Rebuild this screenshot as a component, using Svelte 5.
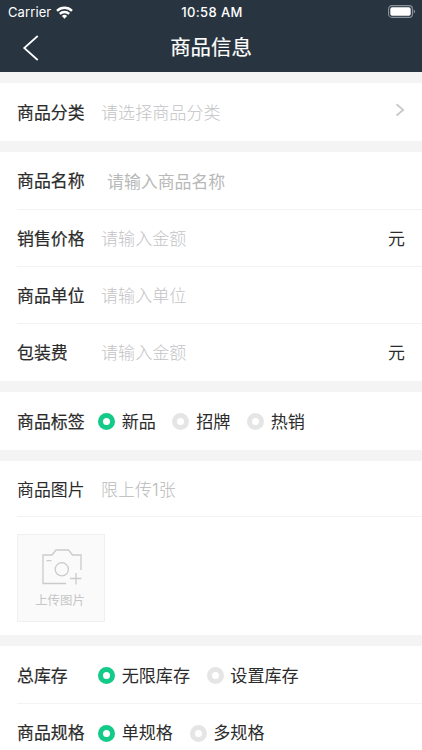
<script>
  const stockOptions = ['无限库存', '设置库存'];
  const specOptions = ['单规格', '多规格'];
  const tagOptions = ['新品', '招牌', '热销'];

  let tag = $state('新品');
  let stock = $state('无限库存');
  let spec = $state('单规格');
</script>

{#snippet radios(options, value, pick)}
  <div class="radios" role="radiogroup">
    {#each options as option (option)}
      <button
        type="button"
        class="radio"
        class:on={option === value}
        role="radio"
        aria-checked={option === value}
        onclick={() => pick(option)}
      >
        <span class="dot"></span>
        <span>{option}</span>
      </button>
    {/each}
  </div>
{/snippet}

<div class="page">
  <header>
    <div class="status">
      <div class="carrier">
        <span>Carrier</span>
        <svg width="17" height="13" viewBox="0 0 17 13" fill="none" stroke="#fff" stroke-width="2.4" aria-hidden="true">
          <path d="M1 4.8a10.7 10.7 0 0 1 15 0" />
          <path d="M3.8 7.9a6.7 6.7 0 0 1 9.4 0" />
          <path d="M8.5 12.7 5.9 10a3.7 3.7 0 0 1 5.2 0z" fill="#fff" stroke="none" />
        </svg>
      </div>
      <span class="time">10:58 AM</span>
      <div class="battery">
        <svg width="28" height="13" viewBox="0 0 28 13" aria-hidden="true">
          <rect x=".6" y=".6" width="23.8" height="11.8" rx="3.2" fill="none" stroke="#89929a" stroke-width="1.1" />
          <rect x="2.3" y="2.2" width="20.4" height="8.6" rx="1.8" fill="#fff" />
          <path d="M25.7 4.5c1.8.6 1.8 3.4 0 4z" fill="#89929a" />
        </svg>
      </div>
    </div>
    <div class="nav">
      <button type="button" class="back" aria-label="返回">
        <svg width="18" height="26" viewBox="0 0 18 26" fill="none" stroke="#fff" stroke-width="1.7" aria-hidden="true">
          <path d="M15.7 1 2.2 13l13.5 12" />
        </svg>
      </button>
      <h1>商品信息</h1>
    </div>
  </header>

  <section>
    <div class="row">
      <span class="label">商品分类</span>
      <span class="hint">请选择商品分类</span>
      <svg class="arrow" width="10" height="14" viewBox="0 0 10 14" fill="none" stroke="#c7c7cc" stroke-width="1.8" aria-hidden="true">
        <path d="m1.5 1.3 6.6 5.6-6.6 5.6" />
      </svg>
    </div>
  </section>

  <section>
    <div class="row name">
      <span class="label">商品名称</span>
      <span class="hint">请输入商品名称</span>
    </div>
    <div class="row">
      <span class="label">销售价格</span>
      <span class="hint">请输入金额</span>
      <span class="unit">元</span>
    </div>
    <div class="row">
      <span class="label">商品单位</span>
      <span class="hint">请输入单位</span>
    </div>
    <div class="row">
      <span class="label">包装费</span>
      <span class="hint">请输入金额</span>
      <span class="unit">元</span>
    </div>
  </section>

  <section>
    <div class="row">
      <span class="label">商品标签</span>
      {@render radios(tagOptions, tag, (v) => (tag = v))}
    </div>
  </section>

  <section>
    <div class="row short">
      <span class="label light">商品图片</span>
      <span class="hint limit">限上传1张</span>
    </div>
    <div class="pictures">
      <button type="button" class="upload">
        <svg width="40" height="36" viewBox="0 0 40 36" fill="none" stroke="#cbcbcb" stroke-width="1.3" aria-hidden="true">
          <path d="M24 34.5H1V6h9l4-5h12.5l4 5H39v15" />
          <circle cx="19.8" cy="20.3" r="6.6" />
          <path d="M4.5 11.7h5M34 24v11.5M28 29.5h11.5" />
        </svg>
        <span>上传图片</span>
      </button>
    </div>
  </section>

  <section>
    <div class="row">
      <span class="label">总库存</span>
      {@render radios(stockOptions, stock, (v) => (stock = v))}
    </div>
    <div class="row">
      <span class="label">商品规格</span>
      {@render radios(specOptions, spec, (v) => (spec = v))}
    </div>
  </section>
</div>

<style>
  :global(body) {
    margin: 0;
    overflow: hidden;
    background: #f4f4f4;
  }

  .page {
    height: 750px;
    overflow: hidden;
    background: #f4f4f4;
    color: #2b2b2b;
    font-family: Inter, 'Noto Sans CJK SC', sans-serif;
    font-size: 16.9px;
    line-height: 24px;
  }

  button {
    padding: 0;
    border: 0;
    background: none;
    color: inherit;
    font: inherit;
  }

  svg {
    display: block;
    flex: none;
  }

  header {
    height: 72px;
    background: #283540;
    color: #fff;
  }

  .status {
    display: grid;
    grid-template-columns: 1fr auto 1fr;
    align-items: center;
    height: 23px;
    padding: 0 6px 0 8px;
    font-size: 13px;
    line-height: 23px;
  }

  .carrier {
    display: flex;
    align-items: center;
    gap: 5px;
    letter-spacing: 0.1px;
  }

  .time {
    padding-top: 1px;
    font-weight: 500;
    letter-spacing: 0.4px;
  }

  .battery {
    justify-self: end;
    margin-bottom: 1px;
  }

  .nav {
    display: grid;
    grid-template-columns: 60px 1fr 60px;
    align-items: center;
    height: 49px;
  }

  .back {
    padding-left: 22px;
  }

  h1 {
    margin: 0;
    padding-top: 1px;
    font-size: 20.4px;
    font-weight: 400;
    line-height: 30px;
    text-align: center;
    -webkit-text-stroke: 0.2px;
  }

  section {
    margin-top: 11px;
    padding-bottom: 1px;
    background: #fff;
  }

  .row {
    display: flex;
    align-items: center;
    box-sizing: border-box;
    height: 57px;
    margin-left: 17px;
    padding: 2px 17px 0 0;
  }

  .row + .row {
    border-top: 1px solid #f3f3f3;
  }

  .row.short {
    height: 56px;
    border-bottom: 1px solid #f3f3f3;
  }

  .label {
    flex: none;
    width: 84px;
    -webkit-text-stroke: 0.2px;
  }

  .label.light {
    -webkit-text-stroke: 0;
  }

  .hint {
    flex: 1;
    color: #c3c3c6;
    font-size: 17.1px;
    font-weight: 300;
  }

  .name {
    padding-top: 0;
  }

  .name .hint {
    padding: 3px 0 0 6px;
    color: #b9b9b9;
    font-size: 16.9px;
    font-weight: 400;
  }

  .hint.limit {
    color: #b9b9b9;
    font-size: 17px;
  }

  .arrow {
    margin-bottom: 6px;
  }

  .radios {
    display: flex;
    gap: 16.6px;
    margin-left: -3px;
    font-size: 17.1px;
  }

  .radio {
    display: flex;
    align-items: center;
    gap: 6.7px;
  }

  .dot {
    box-sizing: border-box;
    width: 17px;
    height: 17px;
    border: 5px solid #e5e5e5;
    border-radius: 50%;
    background: #fff;
  }

  .radio.on .dot {
    border-color: #13ca88;
  }

  .pictures {
    padding: 17px 17px 12px;
  }

  .upload {
    display: flex;
    flex-direction: column;
    align-items: center;
    box-sizing: border-box;
    width: 88px;
    height: 88px;
    padding-top: 14px;
    border: 1px solid #f0f0f0;
    background: #fafafa;
    color: #c6c6c6;
    font-size: 12.4px;
    line-height: 18px;
  }

  .upload svg {
    margin-left: 2px;
  }

  .upload span {
    margin: 7px 2px 0 0;
  }
</style>
